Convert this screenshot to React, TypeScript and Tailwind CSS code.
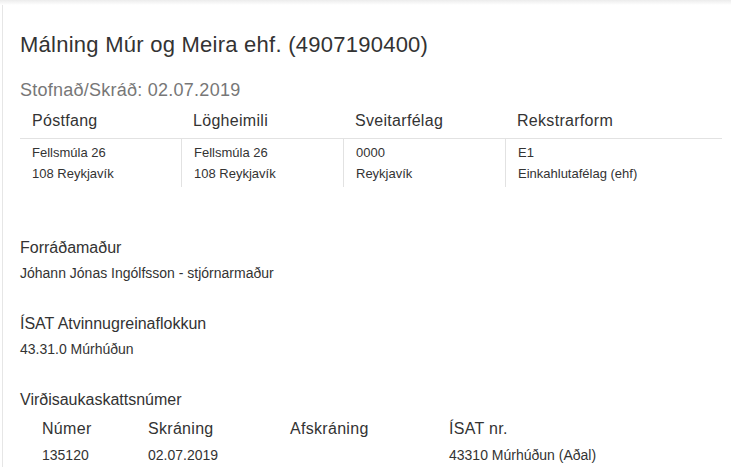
const font = { fontFamily: '"Liberation Sans", Arial, sans-serif' };

const addressCols = [
  { head: 'Póstfang', lines: ['Fellsmúla 26', '108 Reykjavík'] },
  { head: 'Lögheimili', lines: ['Fellsmúla 26', '108 Reykjavík'] },
  { head: 'Sveitarfélag', lines: ['0000', 'Reykjavík'] },
  { head: 'Rekstrarform', lines: ['E1', 'Einkahlutafélag (ehf)'] },
];

const vatCols = [
  { head: 'Númer', value: '135120' },
  { head: 'Skráning', value: '02.07.2019' },
  { head: 'Afskráning', value: '' },
  { head: 'ÍSAT nr.', value: '43310 Múrhúðun (Aðal)' },
];

function Section({ title, children }: { title: string; children: React.ReactNode }) {
  return (
    <div className="mb-[31px]">
      <h3 className="text-[16px] leading-[20px] text-[#333]">{title}</h3>
      <div className="mt-[5px] text-[14px] leading-[20px] text-[#333]">{children}</div>
    </div>
  );
}

export default function App() {
  return (
    <div className="h-[467px] w-[742px] overflow-hidden bg-white text-[#333]" style={font}>
      <div className="h-[5px] w-[731px] bg-gradient-to-b from-[#ececec] to-white" />
      <div className="ml-[2px] h-full w-[729px] border-l border-[#e6e6e6] pl-[17px] pr-[9px]">
        <h1 className="pt-[26px] text-[22px] leading-[28px] tracking-[0.25px] text-[#333]">
          Málning Múr og Meira ehf. (4907190400)
        </h1>
        <p className="mt-[20px] text-[18px] leading-[22px] tracking-[0.25px] text-[#777]">
          Stofnað/Skráð: 02.07.2019
        </p>

        <div className="mt-[4px] grid grid-cols-[161px_162px_162px_1fr]">
          {addressCols.map((c) => (
            <div
              key={c.head}
              className="border-b border-[#e2e2e2] px-3 pb-[7px] pt-[6px] text-[16px] leading-[20px] tracking-[0.3px] text-[#333]"
            >
              {c.head}
            </div>
          ))}
          {addressCols.map((c, i) => (
            <div
              key={c.head + '-body'}
              className={
                'px-3 pb-[3px] pt-[3px] text-[13px] leading-[21px] text-[#333] ' +
                (i > 0 ? 'border-l border-[#e2e2e2]' : '')
              }
            >
              {c.lines.map((l) => (
                <div key={l}>{l}</div>
              ))}
            </div>
          ))}
        </div>

        <div className="mt-[51px]">
          <Section title="Forráðamaður">Jóhann Jónas Ingólfsson - stjórnarmaður</Section>
          <Section title="ÍSAT Atvinnugreinaflokkun">43.31.0 Múrhúðun</Section>
          <h3 className="text-[16px] leading-[20px] text-[#333]">Virðisaukaskattsnúmer</h3>
          <div className="mt-[9px] grid grid-cols-[106px_142px_159px_1fr] pl-[22px]">
            {vatCols.map((c) => (
              <div key={c.head} className="pb-[6px] text-[16px] leading-[20px] tracking-[0.3px] text-[#333]">
                {c.head}
              </div>
            ))}
            {vatCols.map((c) => (
              <div key={c.head + '-v'} className="text-[14px] leading-[20px] text-[#333]">
                {c.value}
              </div>
            ))}
          </div>
        </div>
      </div>
    </div>
  );
}
